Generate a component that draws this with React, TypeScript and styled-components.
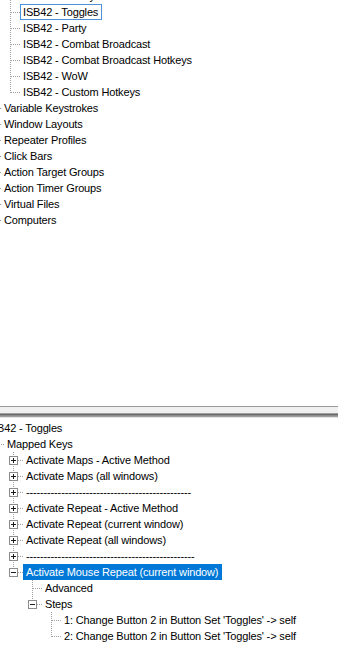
import React from 'react';
import styled, { createGlobalStyle } from 'styled-components';

const Global = createGlobalStyle`
  html, body { margin: 0; padding: 0; background: #fff; }
  body { width: 338px; height: 645px; overflow: hidden; }
`;

type Guide = 'none' | 'pipe' | 'tee' | 'elbow';
type Box = 'plus' | 'minus';
type State = 'focus' | 'selected';

interface Node {
  guides: Guide[];
  label: string;
  box?: Box;
  state?: State;
  root?: boolean;
}

const Window = styled.div`
  width: 338px;
  height: 645px;
  display: flex;
  flex-direction: column;
  font-family: 'Liberation Sans', Arial, sans-serif;
  font-size: 11px;
  letter-spacing: -0.15px;
  color: #000;
  overflow: hidden;
`;

const TopPane = styled.div`
  height: 406px;
  flex-shrink: 0;
  overflow: hidden;
  background: #fff;
`;

const Splitter = styled.div`
  height: 12px;
  flex-shrink: 0;
  background: linear-gradient(
    to bottom,
    #9a9a9a 0px, #9a9a9a 1px,
    #f0f0f0 1px, #f0f0f0 7px,
    #a0a0a0 7px, #a0a0a0 8px,
    #696969 8px, #696969 9px,
    #8c8c8c 9px, #8c8c8c 10px,
    #a0a0a0 10px, #a0a0a0 11px,
    #e3e3e3 11px, #e3e3e3 12px
  );
`;

const BottomPane = styled.div`
  flex: 1;
  overflow: hidden;
  background: #fff;
  padding-top: 2px;
`;

const Tree = styled.ul<{ $shiftX: number; $shiftY: number }>`
  list-style: none;
  margin: ${(p) => p.$shiftY}px 0 0 ${(p) => p.$shiftX}px;
  padding: 0;
  width: max-content;
`;

const Row = styled.li`
  display: flex;
  align-items: center;
  height: 16px;
  white-space: nowrap;
`;

const Cell = styled.span`
  display: block;
  width: 19px;
  height: 16px;
  flex-shrink: 0;
  svg { display: block; }
`;

const Label = styled.span<{ $state?: State; $root?: boolean }>`
  display: block;
  height: 14px;
  line-height: 14px;
  padding: 0 3px 0 2px;
  margin-left: ${(p) => (p.$root ? '-1px' : '0')};
  border: 1px solid
    ${(p) =>
      p.$state === 'focus' ? '#4d90d6' : p.$state === 'selected' ? '#0078d7' : 'transparent'};
  background: ${(p) => (p.$state === 'selected' ? '#0078d7' : 'transparent')};
  color: ${(p) => (p.$state === 'selected' ? '#fff' : '#000')};
`;

const DOT = '#a0a0a0';

const Connector: React.FC<{ guide: Guide; box?: Box }> = ({ guide, box }) => (
  <Cell>
    <svg width="19" height="16" viewBox="0 0 19 16" shapeRendering="crispEdges">
      {(guide === 'pipe' || guide === 'tee') && (
        <line x1="9.5" y1="0" x2="9.5" y2="16" stroke={DOT} strokeDasharray="1 1" />
      )}
      {guide === 'elbow' && (
        <line x1="9.5" y1="0" x2="9.5" y2="9" stroke={DOT} strokeDasharray="1 1" />
      )}
      {(guide === 'tee' || guide === 'elbow') && (
        <line x1={box ? 14 : 10} y1="8.5" x2="19" y2="8.5" stroke={DOT} strokeDasharray="1 1" />
      )}
      {box && (
        <g>
          <rect x="5.5" y="4.5" width="8" height="8" fill="#fff" stroke="#8c8c8c" />
          <line x1="7" y1="8.5" x2="12" y2="8.5" stroke="#1c1c1c" />
          {box === 'plus' && <line x1="9.5" y1="6" x2="9.5" y2="11" stroke="#1c1c1c" />}
        </g>
      )}
    </svg>
  </Cell>
);

const TreeRow: React.FC<{ node: Node }> = ({ node }) => (
  <Row>
    {node.guides.map((g, i) => (
      <Connector key={i} guide={g} box={i === node.guides.length - 1 ? node.box : undefined} />
    ))}
    <Label $state={node.state} $root={node.root}>
      {node.label}
    </Label>
  </Row>
);

const child = (label: string, extra: Partial<Node> = {}): Node => ({
  guides: ['pipe', 'tee'],
  label,
  ...extra,
});
const top = (label: string): Node => ({ guides: ['tee'], label });

const topNodes: Node[] = [
  child('ISB42 - Hotkeys'),
  child('ISB42 - Toggles', { state: 'focus' }),
  child('ISB42 - Party'),
  child('ISB42 - Combat Broadcast'),
  child('ISB42 - Combat Broadcast Hotkeys'),
  child('ISB42 - WoW'),
  child('ISB42 - Custom Hotkeys', { guides: ['pipe', 'elbow'] }),
  top('Variable Keystrokes'),
  top('Window Layouts'),
  top('Repeater Profiles'),
  top('Click Bars'),
  top('Action Target Groups'),
  top('Action Timer Groups'),
  top('Virtual Files'),
  top('Computers'),
];

const dashes1 = '-'.repeat(47);
const dashes2 = '-'.repeat(48);

const key = (label: string, extra: Partial<Node> = {}): Node => ({
  guides: ['none', 'tee'],
  label,
  box: 'plus',
  ...extra,
});

const bottomNodes: Node[] = [
  { guides: [], label: 'ISB42 - Toggles', root: true },
  { guides: ['tee'], label: 'Mapped Keys' },
  key('Activate Maps - Active Method'),
  key('Activate Maps (all windows)'),
  key(dashes1),
  key('Activate Repeat - Active Method'),
  key('Activate Repeat (current window)'),
  key('Activate Repeat (all windows)'),
  key(dashes2),
  key('Activate Mouse Repeat (current window)', {
    guides: ['none', 'elbow'],
    box: 'minus',
    state: 'selected',
  }),
  { guides: ['none', 'none', 'tee'], label: 'Advanced' },
  { guides: ['none', 'none', 'elbow'], label: 'Steps', box: 'minus' },
  {
    guides: ['none', 'none', 'none', 'tee'],
    label: "1: Change Button 2 in Button Set 'Toggles' -> self",
  },
  {
    guides: ['none', 'none', 'none', 'elbow'],
    label: "2: Change Button 2 in Button Set 'Toggles' -> self",
  },
];

export default function App() {
  return (
    <>
      <Global />
      <Window>
        <TopPane>
          <Tree $shiftX={-18} $shiftY={-12}>
            {topNodes.map((n, i) => (
              <TreeRow key={i} node={n} />
            ))}
          </Tree>
        </TopPane>
        <Splitter />
        <BottomPane>
          <Tree $shiftX={-15} $shiftY={0}>
            {bottomNodes.map((n, i) => (
              <TreeRow key={i} node={n} />
            ))}
          </Tree>
        </BottomPane>
      </Window>
    </>
  );
}
